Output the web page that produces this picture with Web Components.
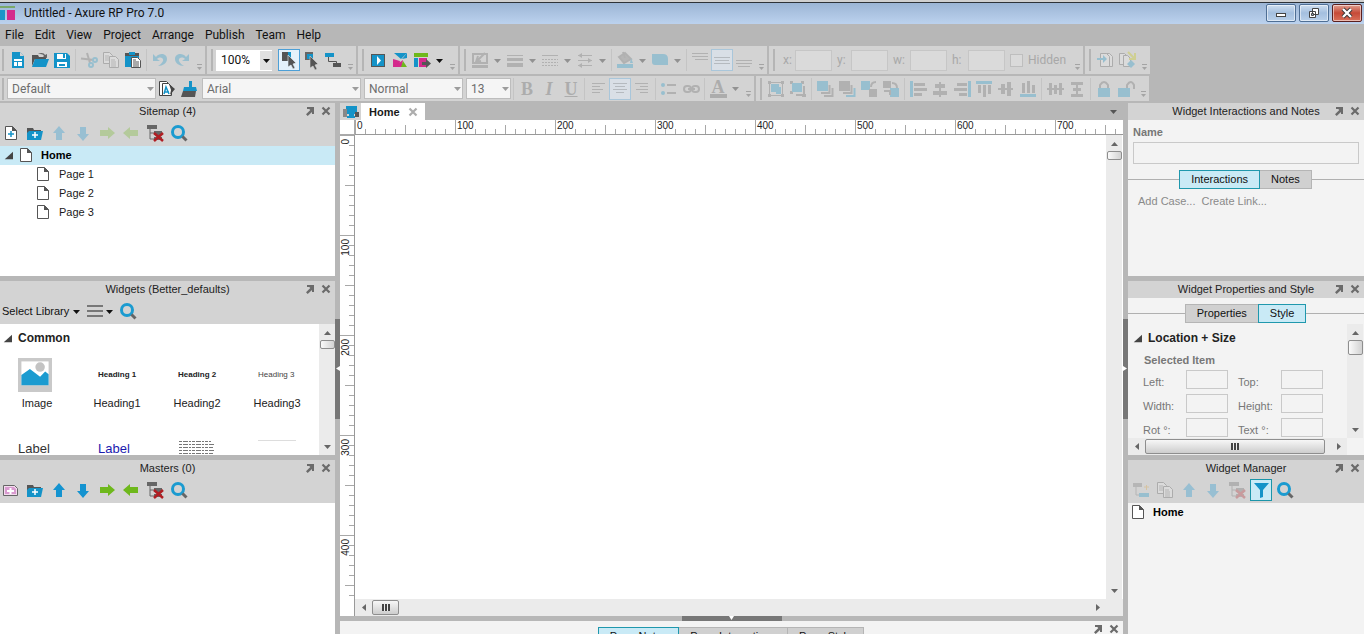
<!DOCTYPE html>
<html lang="en">
<head>
<meta charset="utf-8">
<title>Untitled - Axure RP Pro 7.0</title>
<style>
html,body{margin:0;height:100%;overflow:hidden;font:11px/14px "Liberation Sans",Arial,sans-serif;color:#1a1a1a;
--face:#d3d3d3;--frame:#b7b7b7;--pane:#f3f3f3;--blue:#1b95c9;--lit:#c9eaf6;--ui:Roboto,"Open Sans",sans-serif}
</style>
</head>
<body>
<app-window></app-window>
<script>
const B='#1493c8',G='#666',GR='#6eb81c',P='#d42a8c',R='#b01e23';
const page='<path d="M4.500 3.500h7l4 4v9h-11z" fill="#fff" stroke="#555"/><path d="M11 3v5h5z" fill="#555"/>';
const search='<circle cx="9" cy="9" r="5.500" fill="none" stroke="#1b9bd0" stroke-width="3"/><path d="M13.500 13.500l4 4" stroke="#666" stroke-width="3"/>';
const folder='<path d="M2 5h6l1 2h7v2H5l-3 7z" fill="#555"/><path d="M4 8h14l-2 9H2V10z" fill="#1493c8"/>';
const tree='<path d="M2 2h10v4H2zM9 8h8v4H9zM9 14h8v3H9z" fill="#666"/><path d="M5 5v11h4M5 10h4" stroke="#666" fill="none"/>';
const lines=(a,c=G)=>a.map(([x,y,w])=>`<path d="M${x} ${y}h${w}" stroke="${c}" stroke-width="1"/>`).join('');
const box=(x,y,w,h,c)=>`<rect x="${x}" y="${y}" width="${w}" height="${h}" fill="${c}"/>`;
const cursor='<path d="M9 6l8 8-3 1 2 4-2 1-2-4-3 2z" fill="#555" stroke="#d3d3d3" stroke-width=".6"/>';
const ICONS={
 newfile:'<path d="M4 2h8l4 4v12H4z" fill="#1493c8"/><path d="M6 9h8v7H6z" fill="#fff"/><path d="M6 11.500h8M9.500 11v5" stroke="#1493c8"/><path d="M12 2v4h4z" fill="#d3d3d3"/>',
 open:'<path d="M2 5h6l1 2h7v2H5l-3 7z" fill="#555"/><path d="M5 9h14l-3 8H2z" fill="#1493c8"/><path d="M8 4c4-2 6-1 7 1l2-1v4l-4-1 1-1c-1-2-3-2-6-2z" fill="#666"/>',
 save:'<path d="M2 3h13l3 3v12H2z" fill="#1493c8"/><path d="M5 4h9v5H5zM5 12h10v5H5z" fill="#fff"/><path d="M11 4h2v4h-2zM7 14h6v2H7z" fill="#1493c8"/>',
 cut:'<path d="M2 8.500l13 1.500M8 3l3 10" stroke="#666" stroke-width="2"/><circle cx="12" cy="15" r="2" fill="none" stroke="#1493c8" stroke-width="2"/><circle cx="16" cy="10" r="2" fill="none" stroke="#1493c8" stroke-width="2"/>',
 copy:'<path d="M2.500 2.500h6l3 3v8h-9z" fill="#eee" stroke="#555"/><path d="M8.500 6.500h6l3 3v8h-9z" fill="#eee" stroke="#555"/><path d="M4 6h4M4 8h4M4 10h4M10 10h4M10 12h5M10 14h5M10 16h5" stroke="#777"/>',
 paste:'<path d="M2 3h14v14H2z" fill="#1493c8"/><path d="M2 3h14v3H2z" fill="#555"/><path d="M6 2h6v3H6z" fill="#1493c8"/><path d="M8.500 7.500h6l3 3v7h-9z" fill="#fff" stroke="#555"/><path d="M10 10h3M10 12h6M10 14h6M10 16h6" stroke="#555"/>',
 undo:'<path d="M3 4v7h7l-3-2c3-3 7-1 6 2-1 2-3 4-5 5 5 0 9-3 9-7 0-5-7-7-11-2z" fill="#1493c8"/>',
 redo:'<path d="M17 4v7h-7l3-2c-3-3-7-1-6 2 1 2 3 4 5 5-5 0-9-3-9-7 0-5 7-7 11-2z" fill="#1493c8"/>',
 sel1:box(3,2,9,9,'#555')+'<path d="M9 2h3v9H9z" fill="#1493c8"/><path d="M9 5l8 8-3 1 2 4-2 1-2-4-3 2z" fill="#555" stroke="#e6f3fb" stroke-width=".6"/>',
 sel2:box(4,2,8,8,'#666')+box(6,4,6,5,B)+cursor,
 connect:box(2,3,9,4,B)+box(10,13,8,4,'#555')+'<path d="M5.500 7v4.500h8v2" stroke="#555" fill="none"/>',
 preview:box(3,4,14,13,'#555')+box(4,5,12,11,B)+'<path d="M9 6l4 4.500-4 4.500z" fill="#fff"/>',
 share:'<path d="M4 3h13l-6 6z" fill="#1493c8"/><path d="M3 9l7 2-1 6H3z" fill="#d42a8c"/><path d="M3 17l10-7-1 7z" fill="#d42a8c"/><path d="M12 9l5-6v5z" fill="#1493c8"/><path d="M13 11l4 6h-6z" fill="#6eb81c"/>',
 publish:box(2,3,14,4,GR)+box(2,8,4,9,B)+box(7,8,8,9,P)+'<path d="M10 12h4v-3l5 4.500-5 4.500v-3h-4z" fill="#555"/>',
 linecolor:'<path d="M3 4h14v9H3zM6 12l9-9M8 6l-2 6 5-1" stroke="#666" stroke-width="2" fill="none"/>'+box(2,15,16,3,G),
 linewidth:lines([[2,5.5,16]])+box(2,8,16,3,G)+box(2,13,16,4,G),
 linestyle:'<path d="M2 5.500h16" stroke="#666"/><path d="M2 9.500h16M2 12.500h16M2 15.500h16" stroke="#666" stroke-dasharray="2 1"/>',
 arrows:'<path d="M3 5.500h14M3 10.500h14M3 15.500h14" stroke="#666"/><path d="M7 3v5L3 5.500zM13 8v5l4-2.500zM7 13v5l-4-2.500z" fill="#666"/>',
 fill:'<path d="M4 7l6-4 6 6-7 4zM8 2l2 6" stroke="#666" stroke-width="2" fill="#777"/><path d="M16 8l2 5h-3z" fill="#1493c8"/>'+box(2,14,16,4,B),
 shape:'<path d="M2 4h11q5 0 5 5v6H5q-3 0-3-3z" fill="#1493c8"/>',
 vtop:lines([[2,3.5,16],[2,6.5,16],[5,9.5,13]]),vmid:lines([[2,7.5,16],[3,10.5,14],[2,13.5,16]]),vbot:lines([[2,10.5,16],[2,13.5,16],[4,16.5,12]]),
 editstyle:'<path d="M2.500 2.500h7l2 2v12h-9z" fill="#fff" stroke="#444"/><path d="M5.500 4.500h6l3 3v9h-9z" fill="#fff" stroke="#444"/><path d="M7 15l2-7 3 7M8 13h4" stroke="#1493c8" stroke-width="1.500" fill="none"/><path d="M12 5l6 5-5 6 1-5z" fill="#444"/>',
 brush:'<path d="M10 2h3v7h-3z" fill="#1493c8"/><path d="M5 8h12l1 4H4z" fill="#1493c8"/><path d="M4 12h13l-1 6H2z" fill="#555"/>',
 left:lines([[4,4.5,13],[4,7.5,8],[4,10.5,11],[4,13.5,8]]),center:lines([[3,4.5,14],[5,7.5,10],[3,10.5,14],[6,13.5,8]]),right:lines([[3,4.5,13],[8,7.5,8],[4,10.5,12],[8,13.5,8]]),
 bullets:'<circle cx="4" cy="6" r="2" fill="#1493c8"/><circle cx="4" cy="14" r="2" fill="#1493c8"/><path d="M8 6h9M8 14h9" stroke="#666" stroke-width="2"/>',
 link:'<rect x="3" y="7" width="7" height="6" rx="3" fill="none" stroke="#666" stroke-width="2"/><rect x="11" y="7" width="7" height="6" rx="3" fill="none" stroke="#666" stroke-width="2"/><path d="M7 10h7" stroke="#666" stroke-width="2"/>',
 master1:'<path d="M8.500 3.500h6l3 3v10h-9z" fill="#eee" stroke="#555"/><path d="M5.500 3.500h6l3 3v10h-9z" fill="#eee" stroke="#555"/><path d="M2 8h6V5l4 4-4 4v-3H2z" fill="#1493c8"/>',
 master2:'<path d="M2.500 3.500h5l3 3v8h-8z" fill="#eee" stroke="#555"/><path d="M6.500 5.500h4l3 3v8h-7z" fill="#eee" stroke="#555"/><path d="M11 2l6 6M12 9h6V3" stroke="#c6c800" stroke-width="2" fill="none"/><path d="M14 10l4 4-4 4-4-4z" fill="#1493c8"/>',
 group:'<path d="M3.500 3.500h13v13h-13z" fill="none" stroke="#666"/>'+box(2,2,3,3,G)+box(15,2,3,3,G)+box(2,15,3,3,G)+box(15,15,3,3,G)+box(5,5,8,8,B)+box(10,8,5,7,B),
 ungroup:box(2,2,3,3,G)+box(13,2,3,3,G)+box(2,12,3,3,G)+box(4,4,10,9,B)+'<path d="M16 7v9H8" stroke="#666" stroke-width="2" fill="none"/>'+box(14,15,4,3,G),
 front:box(2,2,11,10,B)+'<path d="M14.500 6v8H6M17.500 9v8H9" stroke="#666" stroke-width="2" fill="none"/>',
 back:box(2,2,11,10,G)+'<path d="M14.500 6v8H6" stroke="#666" stroke-width="2" fill="none"/><path d="M17.500 9v8H9" stroke="#1493c8" stroke-width="2" fill="none"/>',
 forward:box(2,2,9,9,B)+box(10,10,8,8,G)+'<path d="M17 3c-4 0-5 2-5 5" stroke="#666" stroke-width="2" fill="none"/>',
 backward:box(2,2,8,7,G)+box(9,9,9,9,B)+'<path d="M11 4c4 0 5 2 5 5M3 12h6v4" stroke="#666" stroke-width="2" fill="none"/>',
 al:box(2,2,3,16,B)+box(6,4,11,3,G)+box(6,9,13,3,G)+box(6,14,8,3,G),
 ac:box(9,3,2,15,G)+box(5,5,10,4,G)+box(3,12,14,4,G),
 ar:box(16,2,3,16,B)+box(5,4,10,3,G)+box(2,9,13,3,G)+box(7,14,8,3,G),
 at:box(2,2,16,3,B)+box(4,6,3,8,G)+box(9,6,3,12,G)+box(14,6,3,9,G),
 am:box(2,9,15,2,G)+box(5,5,4,10,G)+box(11,3,4,14,G),
 ab:box(2,15,16,3,B)+box(4,4,3,10,G)+box(9,2,3,12,G)+box(14,6,3,8,G),
 dh:box(4,4,3,12,G)+box(9,6,3,9,G)+box(14,4,3,12,G)+box(2,9,17,2,G),
 dv:box(4,3,12,3,G)+box(6,9,8,3,G)+box(4,15,12,3,G)+box(9,3,2,14,G),
 lock:'<path d="M6 10V6q4-6 8 0v4" stroke="#666" stroke-width="2" fill="none"/>'+box(4,9,12,9,B),
 unlock:'<path d="M11 10V6q4-6 7 0v4" stroke="#666" stroke-width="2" fill="none"/>'+box(2,9,12,9,B),
 addpage:page+'<path d="M7 11h6M10 8v6" stroke="#1493c8" stroke-width="1.500"/>',
 addfolder:folder+'<path d="M7 12h6M10 9v6" stroke="#fff" stroke-width="1.500"/>',
 addmaster:'<path d="M2.500 5.500h11l3 3v7h-14z" fill="#f3dcee" stroke="#666"/><path d="M4 7h9l2 2v5H4z" fill="#d99bd0"/><path d="M6 11h7M9.500 8v6" stroke="#fff" stroke-width="2"/>',
 up:'<path d="M10 3l6 7h-3v7H7v-7H4z" fill="#1493d0"/>',down:'<path d="M10 18l6-7h-3V4H7v7H4z" fill="#1493d0"/>',
 indent:'<path d="M18 10l-7 6v-3H3V7h8V4z" fill="#6eb81c"/>',outdent:'<path d="M2 10l7 6v-3h8V7H9V4z" fill="#6eb81c"/>',
 remove:tree+'<path d="M9 10l9 8M18 10l-9 8" stroke="#b01e23" stroke-width="2.500"/>',
 search,page,
 menu:'<path d="M2 5h16M2 10h16M2 15h16" stroke="#777" stroke-width="2"/>',
 addtree:'<path d="M2 3h9v4H2zM10 13h8v4h-8z" fill="#777"/><path d="M5 6v9h5" stroke="#777" fill="none"/>'+box(8,13,10,4,B)+'<path d="M13 7h5M15.500 5v5" stroke="#e0a030"/>',
 filter:'<path d="M3 3h15l-6 7v7l-3 1v-8z" fill="#1493c8"/>',
 devices:'<path d="M5 4h11v8H5z" fill="#1493c8"/><path d="M8 12h5v3H8z" fill="#1493c8"/><path d="M2 7h4v8H2z" fill="#888"/><path d="M14 10h4v5h-4z" fill="#555"/><path d="M6 14h8v2H6z" fill="#1493c8"/>',
 pop:'<path d="M7 6h7v7l-2-2-4.300 4-1.700-1.700L10.300 9z" fill="#6b6b6b"/><path d="M7 6h7v7h-2V8H7z" fill="#6b6b6b"/>',
 close:'<path d="M6.500 6.500l7 7M13.500 6.500l-7 7" stroke="#6b6b6b" stroke-width="2.200"/>',
 twist:'<path d="M16 5v10H5z" fill="#444"/>',
 picture:'<path d="M0 0h20v20H0z" fill="#c9c9c9"/><path d="M2 2h16v14H2z" fill="#fff"/><circle cx="13" cy="5.300" r="2.800" fill="#c3c3c3"/><path d="M2 10l5-3.500 6 4.500 3-3 2 1.500V16H2z" fill="#1b9bd0"/>',
};
const svg=(n,s=20)=>`<svg width="${s}" height="${s}" viewBox="0 0 20 20" aria-hidden="true">${ICONS[n]}</svg>`;
const tri=(d='d',c='#666')=>`<svg width="7" height="7" viewBox="0 0 7 7" aria-hidden="true"><path d="${{d:'M0 2h7L3.500 6z',u:'M0 6h7L3.500 2z',l:'M6 0v7L2 3.500z',r:'M2 0v7l4-3.500z'}[d]}" fill="${c}"/></svg>`;
const BASE='*{box-sizing:border-box}button,input,select{font:inherit;color:inherit;margin:0;padding:0;border:0;border-radius:0;background:none;min-width:0}svg{display:block;flex:none}';
function define(name,css,html){
 customElements.define(name,class extends HTMLElement{
  connectedCallback(){
   if(this.shadowRoot)return;
   this.attachShadow({mode:'open'}).innerHTML=`<style>${BASE}${css}</style>`+(typeof html==='function'?html(this):html);
  }
 });
}
const at=(e,n,d='')=>e.getAttribute(n)??d;

define('tool-button',`:host{display:flex;flex:none;width:22px;height:22px}button{display:grid;place-items:center;place-content:center;width:100%;height:100%}
button:disabled>*{opacity:.3}:host([on]) button{background:#e4f1fa;border:1px solid #4d9fd6}:host([on]) button:disabled{background:#d9dfe6;border-color:#a9c6da}
:host([wide]){width:24px}:host([key]){margin:0 1px}:host([key]) button{background:var(--lit);border-color:#1b95a9}
b{font:bold 18px/20px "Liberation Serif",serif;color:#555}.i{font-style:italic}.u{text-decoration:underline}.a{border-bottom:4px solid #555;line-height:14px;padding:0 2px}`,
 e=>`<button type="button" aria-label="${at(e,'icon')||at(e,'glyph')}" ${e.hasAttribute('off')?'disabled':''}>${e.hasAttribute('glyph')?`<b class="${at(e,'glyph').toLowerCase()}">${at(e,'glyph')}</b>`:svg(at(e,'icon'))}</button>`);
define('tool-arrow',':host{display:grid;place-items:center;flex:none;width:13px;height:22px}:host([off]){opacity:.7}',e=>tri('d',e.hasAttribute('off')?'#777':'#111'));
define('tool-sep',':host{display:grid;place-items:center;flex:none;width:5px;height:24px}i{width:1px;height:22px;background:#c4c4c4}','<i></i>');
define('tool-group',`:host{display:flex;align-items:center;background:var(--face);border-right:2px solid var(--frame);padding-left:4px}:host([first]){padding-left:2px}
.grip{flex:none;width:2px;height:22px;background:#b5b5b5;margin-right:3px}.more{flex:none;width:12px;align-self:flex-end;padding:0 3px 3px;opacity:.5}`,
 '<span class="grip"></span><slot></slot><span class="more"><svg width="7" height="7" viewBox="0 0 7 7"><path d="M1 .500h5" stroke="#777"/><path d="M1 3h5L3.500 6z" fill="#777"/></svg></span>');
define('tool-select',`:host{display:grid;flex:none;height:21px;font:12px/18px var(--ui);width:var(--w)}
select,.arrow{grid-area:1/1}select{appearance:none;width:100%;background:#f5f5f5;border:1px solid #bdbdbd;padding:0 14px 0 4px;color:#6d6d6d;opacity:1}
.arrow{justify-self:end;display:grid;place-items:center;width:12px;pointer-events:none;opacity:.7}
:host([live]) select{background:#fff;color:#111;border-color:#fff}:host([live]) .arrow{background:#e0e0e0;opacity:1;margin:1px 0}`,
 e=>`<select aria-label="${at(e,'label')}"><option>${at(e,'value')}</option></select><span class="arrow">${tri('d',e.hasAttribute('live')?'#111':'#777')}</span>`);
define('coord-field',`:host{display:flex;flex:none;align-items:center;font:12px/18px var(--ui);color:#a8a8a8;width:var(--w);padding-left:5px}
label{display:flex;flex:1;justify-content:space-between;align-items:center}input{width:37px;height:21px;border:1px solid #c6c6c6;background:#dadada}`,
 e=>`<label>${at(e,'label')}<input type="text" disabled></label>`);
define('hidden-check',`:host{display:block;flex:none;font:12px/18px var(--ui);color:#a8a8a8;width:66px;padding-left:5px}
label{display:flex;align-items:center;gap:5px}input{appearance:none;width:13px;height:13px;border:1px solid #bebebe;background:#dadada}`,
 '<label><input type="checkbox" disabled>Hidden</label>');

define('title-bar',`:host{display:flex;height:24px;border-top:2px solid #d0d0d0;box-shadow:inset 0 1px #2e3338;background:linear-gradient(#9ab4d4,#bcd2ee);align-items:center;
 padding:0 2px 0 0;font:12px/20px var(--ui);color:#111}
.logo{margin-right:9px}.t{flex:1;white-space:nowrap}.w{display:flex;gap:3px}
button{width:30px;height:18px;border:1px solid #4f6f95;border-radius:2px;background:linear-gradient(#cfdff0,#a4bfdf 50%,#b9d0ea);display:grid;place-items:center;box-shadow:inset 0 0 0 1px #ffffff88}
.x{background:linear-gradient(#e0a090,#c64a38 50%,#d9705a);border-color:#5a2020}`,
 `<svg class="logo" width="15" height="16" viewBox="0 0 15 16"><path d="M0 1h15v2H0z" fill="#7aa86a"/><path d="M0 5h5v10H0z" fill="#1b95c9"/><path d="M7 5h8v10H7z" fill="#d42a8c"/></svg><span class="t">Untitled - Axure RP Pro 7.0</span>
<div class="w"><button aria-label="Minimize"><svg width="12" height="12"><rect x="1.500" y="6.500" width="9" height="3" fill="#fff" stroke="#444"/></svg></button>
<button aria-label="Restore"><svg width="12" height="12"><path d="M4.500 1.500h6v6h-6zM1.500 4.500h6v6h-6z" fill="#fff" stroke="#444"/><path d="M3.500 6.500h2v2h-2z" fill="#9ab" stroke="#444"/></svg></button>
<button class="x" aria-label="Close"><svg width="12" height="12"><path d="M2 2l8 8M10 2l-8 8" stroke="#333" stroke-width="4"/><path d="M2 2l8 8M10 2l-8 8" stroke="#fff" stroke-width="2.400"/></svg></button></div>`);
define('menu-bar',`:host{display:flex;gap:11px;height:22px;padding-left:5px;align-items:center;font:12px/20px var(--ui);color:#111}`,
 ['File','Edit','View','Project','Arrange','Publish','Team','Help'].map(t=>`<button type="button">${t}</button>`).join(''));
const b=(n,x='off')=>`<tool-button icon="${n}" ${x}></tool-button>`, s='<tool-sep></tool-sep>', ad='<tool-arrow off></tool-arrow>';
define('tool-bars',`:host{display:block}.r{display:flex;height:28px;margin-bottom:2px;overflow:hidden}.q{height:25px}
tool-group{flex:none}.z{--w:56px;margin-right:6px}.z1{--w:149px}.z2{--w:159px;margin:0 3px 0 2px}.z3{--w:99px;margin-right:3px}.z4{--w:45px}`,
 `<div class="r"><tool-group first>${b('newfile','')+b('open','')+b('save','')+s+b('cut')+b('copy')+b('paste','')+s+b('undo')+b('redo')}</tool-group>
<tool-group><tool-select class="z" live label="Zoom" value="100%"></tool-select>${b('sel1','on')+b('sel2','')+b('connect','')}</tool-group>
<tool-group>${b('preview','')+b('share','')+b('publish','')}<tool-arrow></tool-arrow></tool-group>
<tool-group>${['linecolor','linewidth','linestyle','arrows'].map(n=>b(n)+ad).join('')+s+b('fill')+ad+b('shape')+ad+s+b('vtop')+b('vmid','off on')+b('vbot')}</tool-group>
<tool-group><coord-field style="--w:54px" label="x:"></coord-field><coord-field style="--w:56px" label="y:"></coord-field><coord-field style="--w:59px" label="w:"></coord-field><coord-field style="--w:58px" label="h:"></coord-field><hidden-check></hidden-check></tool-group>
<tool-group>${b('master1')+b('master2')}</tool-group></div>
<div class="r q"><tool-group first><tool-select class="z1" label="Style" value="Default"></tool-select>${b('editstyle','')+b('brush','')}
<tool-select class="z2" label="Font" value="Arial"></tool-select><tool-select class="z3" label="Typeface" value="Normal"></tool-select><tool-select class="z4" label="Size" value="13"></tool-select>${s}
<tool-button glyph="B" off></tool-button><tool-button glyph="I" off></tool-button><tool-button glyph="U" off></tool-button>${s+b('left')+b('center','off on')+b('right')+s+b('bullets')+b('link')+s}<tool-button glyph="A" off></tool-button>${ad}</tool-group>
<tool-group>${b('group')+b('ungroup')+s+['front','back','forward','backward'].map(n=>b(n)).join('')+s+['al','ac','ar','at','am','ab'].map(n=>b(n)).join('')+s+b('dh')+b('dv')+s+b('lock')+b('unlock')}</tool-group></div>`);

define('dock-title',`:host{display:grid;grid-template-columns:36px 1fr 36px;height:17px;align-items:center;text-align:center;background:var(--face);color:#222}
.c{display:flex;justify-content:flex-end;gap:1px;padding-right:2px}button{width:15px;height:15px;display:grid;place-content:center;margin-bottom:1px}.t{grid-column:2;white-space:nowrap;padding-bottom:2px}:host([bare]){background:none}`,
 e=>`<span class="t"><slot></slot></span><span class="c"><button aria-label="Float">${svg('pop')}</button><button aria-label="Close">${svg('close')}</button></span>`);
define('dock-tools',':host{display:flex;height:26px;align-items:center;background:var(--face);padding-left:1px}','<slot></slot>');
define('tree-row',`:host{display:flex;align-items:center;height:19px;padding-left:1px}:host([sel]){background:var(--lit)}:host([child]){padding-left:33px}
:host([plain]){padding-left:0}svg{margin-bottom:1px}.n{margin-left:5px;padding-bottom:2px}:host([bold]) .n{font-weight:bold;color:#000}.tw{width:15px}:host([child]) .n{margin-left:6px}`,
 e=>(e.hasAttribute('child')||e.hasAttribute('plain')?'':`<span class="tw">${svg('twist',15)}</span>`)+svg('page')+'<span class="n"><slot></slot></span>');
define('tab-pair',`:host{display:flex;align-items:center;height:19px}:host::before,:host::after{content:"";flex:1;height:1px;background:#b0b0b0}
button{height:19px;padding:0 11px 2px;background:#d0d0d0;border:1px solid #b5b5b5;margin-left:-1px;white-space:nowrap;color:#111}button.on{background:var(--lit);border-color:#1f98ad;position:relative}`,
 e=>at(e,'tabs').split('|').map((t,i)=>`<button type="button" class="${i==at(e,'on')?'on':''}">${t}</button>`).join(''));
define('scroll-rail',`:host{display:flex;flex-direction:column;align-items:center;width:16px;background:#ebebeb;padding:5px 0}
:host([h]){flex-direction:row;width:auto;height:17px;padding:0 5px}.th{flex:none;display:grid;place-items:center;width:15px;height:var(--t,9px);margin-top:4px;border:1px solid #8e8e8e;border-radius:2px;background:linear-gradient(90deg,#fafafa,#d2d2d2)}
:host([h]) .th{width:var(--t);height:15px;margin:0 0 0 5px;background:linear-gradient(#f7f7f7,#cdcdcd)}.sp{flex:1}.g{width:8px;height:7px;background:repeating-linear-gradient(90deg,#444 0 2px,#eee 2px 3px)}`,
 e=>{const h=e.hasAttribute('h');return tri(h?'l':'u')+`<span class="th">${h?'<i class="g"></i>':''}</span><span class="sp"></span>`+tri(h?'r':'d');});
define('widget-tile',`:host{display:grid;grid-template-rows:34px 14px;padding-top:6px;justify-items:center;text-align:center;row-gap:4px;color:#222}
.p{display:grid;align-items:center;justify-self:start;padding-left:21px;font:bold 8px/10px "Liberation Sans",sans-serif}:host([thin]) .p{font-weight:normal;color:#444}:host([big]) .p{font:13px/16px "Liberation Sans",sans-serif;color:#333}:host([blue]) .p{color:#1a1aae}`,
 '<span class="p"><slot name="art"></slot></span><slot></slot>');
define('site-map',':host{display:flex;flex-direction:column;background:#fff}dock-tools{padding:0;margin-left:-1px;overflow:hidden}',
 `<dock-title>Sitemap (4)</dock-title><dock-tools>${b('addpage','wide')+b('addfolder','wide')+['up','down','indent','outdent'].map(n=>b(n,'wide off')).join('')+b('remove','wide')+b('search','wide')}</dock-tools>
<tree-row sel bold>Home</tree-row><tree-row child>Page 1</tree-row><tree-row child>Page 2</tree-row><tree-row child>Page 3</tree-row>`);
define('widget-library',`:host{display:flex;flex-direction:column;background:#fff;overflow:hidden}.b{display:grid;grid-template-columns:1fr 16px;flex:1;min-height:0}
.l{overflow:hidden;min-height:0;padding-top:4px}h2{display:flex;align-items:center;gap:3px;margin:0;font:bold 12px/20px "Liberation Sans",sans-serif;height:20px;color:#222}
.g{display:grid;grid-template-columns:repeat(4,80px);margin-left:-3px;padding-top:4px;row-gap:16px}dock-tools tool-button{margin-left:3px}tool-arrow{margin:0 -2px 0 0}.k{color:#111;padding:0 1px}tool-button+tool-arrow{margin-left:-3px}`,
 `<dock-title>Widgets (Better_defaults)</dock-title><dock-tools><button class="k">Select Library</button><tool-arrow></tool-arrow>${b('menu','')}<tool-arrow></tool-arrow>${b('search','')}</dock-tools>
<div class="b"><div class="l"><h2>${svg('twist',15)}Common</h2><div class="g">
<widget-tile><span slot="art">${svg('picture',34)}</span>Image</widget-tile><widget-tile><span slot="art">Heading 1</span>Heading1</widget-tile><widget-tile><span slot="art">Heading 2</span>Heading2</widget-tile><widget-tile thin><span slot="art">Heading 3</span>Heading3</widget-tile>
<widget-tile big><span slot="art">Label</span></widget-tile><widget-tile big blue><span slot="art">Label</span></widget-tile>
<widget-tile><svg slot="art" width="38" height="18"><path d="M1 1.500h32M1 4.500h36M1 7.500h34M1 10.500h36M1 13.500h34M1 16.500h35" stroke="#777" stroke-width="1" stroke-dasharray="3 1 5 1 2 1"/></svg></widget-tile>
<widget-tile><svg slot="art" width="38" height="20"><path d="M0 1.500h38" stroke="#ddd"/></svg></widget-tile></div></div><scroll-rail></scroll-rail></div>`);
define('master-list',':host{display:flex;flex-direction:column;background:#fff}dock-tools{padding:0;margin-left:-1px;overflow:hidden}',
 `<dock-title>Masters (0)</dock-title><dock-tools>${['addmaster','addfolder','up','down','indent','outdent','remove','search'].map(n=>b(n,'wide')).join('')}</dock-tools>`);
define('interaction-pane',`:host{display:flex;flex-direction:column;background:var(--pane)}label{display:grid;gap:3px;padding:5px 5px 0;font-weight:bold;color:#777}input{height:22px;width:100%;border:1px solid #c9c9c9}
tab-pair{margin-top:6px}p{display:flex;gap:6px;margin:5px 0 0 10px}a{color:#8a8a8a;text-decoration:none}`,
 `<dock-title>Widget Interactions and Notes</dock-title><label>Name<input type="text"></label><tab-pair tabs="Interactions|Notes" on="0"></tab-pair><p><a href="#case">Add Case...</a><a href="#link">Create Link...</a></p>`);
define('style-pane',`:host{display:flex;flex-direction:column;background:var(--pane);overflow:hidden}tab-pair{margin-top:6px}.b{display:grid;grid-template-columns:1fr 17px;grid-template-rows:1fr 17px;flex:1;min-height:0;margin-top:1px}
.l{overflow:hidden;min-height:0;padding-top:4px}h2{display:flex;align-items:center;gap:3px;margin:0 0 0 2px;font:bold 12px/20px "Liberation Sans",sans-serif;color:#222}h3{margin:5px 0 3px 16px;font:bold 11px/14px "Liberation Sans",sans-serif;color:#777}
.f{display:grid;grid-template-columns:43px 42px 53px 42px;gap:5px 0;margin-left:15px;color:#777}.f label{align-self:end}.f input{height:19px;border:1px solid #c9c9c9}.f label:nth-of-type(even){padding-left:10px}.v{--t:15px}.h{--t:180px}`,
 `<dock-title>Widget Properties and Style</dock-title><tab-pair tabs="Properties|Style" on="1"></tab-pair><div class="b"><div class="l"><h2>${svg('twist',15)}Location + Size</h2><h3>Selected Item</h3><div class="f">
${['Left:','Top:','Width:','Height:','Rot °:','Text °:'].map((t,i)=>`<label for="f${i}">${t}</label><input id="f${i}" type="text">`).join('')}</div></div><scroll-rail class="v"></scroll-rail><scroll-rail class="h" h></scroll-rail></div>`);
define('manager-pane',':host{display:flex;flex-direction:column;background:var(--pane)}',
 `<dock-title>Widget Manager</dock-title><dock-tools>${['addtree','copy','up','down','remove'].map(n=>b(n,'wide off')).join('')+b('filter','on key')+b('search','wide')}</dock-tools><tree-row plain bold>Home</tree-row>`);

const T='#a8a8a8';
define('ruler-strip',`:host{display:flex;overflow:hidden;background:#fff;font:10px/12px "Liberation Sans",sans-serif;color:#222}
span{flex:none;width:100px;padding-left:2px;
background:linear-gradient(${T},${T}) 0 0/1px 100% no-repeat,linear-gradient(${T},${T}) 50px 100%/1px 9px no-repeat,repeating-linear-gradient(90deg,${T} 0 1px,transparent 1px 10px) 0 100%/100% 5px no-repeat}
:host{border-bottom:1px solid #999}:host([v]){flex-direction:column;border:0;border-right:1px solid #999}
:host([v]) span{width:auto;height:100px;padding:4px 0 0;background:linear-gradient(${T},${T}) 0 0/100% 1px no-repeat,linear-gradient(${T},${T}) 100% 50px/9px 1px no-repeat,repeating-linear-gradient(${T} 0 1px,transparent 1px 10px) 100% 0/5px 100% no-repeat}
:host([v]) b{display:block;writing-mode:vertical-rl;transform:rotate(180deg);width:12px}b{font-weight:normal}`,
 e=>Array.from({length:+at(e,'count')},(_,i)=>`<span><b>${i*100}</b></span>`).join(''));
define('split-bar',`:host{display:grid;place-items:center;background:var(--frame)}i{display:grid;place-items:center;width:5px;height:100px;background:#777}:host([h]) i{width:100px;height:5px}`,
 e=>`<i><svg width="5" height="5" viewBox="0 0 5 5"><path d="${{l:'M5 0v5L1 2.500z',r:'M0 0v5l4-2.500z',d:'M0 0h5L2.500 4z'}[at(e,'dir')]}" fill="#fff"/></svg></i>`);
define('design-area',`:host{display:grid;grid-template-rows:17px 15px minmax(0,1fr) 17px 5px 13px;min-width:0;min-height:0}
.tabs{display:flex;align-items:stretch}.dev{width:21px;background:var(--face);display:grid;place-content:center;overflow:hidden}.tab{display:flex;align-items:center;background:#fff;padding:0 4px 0 8px;font-weight:bold;gap:6px}
.tab button{opacity:.55;width:15px;height:15px;display:grid;place-content:center}.more{margin-left:auto;width:20px;display:grid;place-items:center}
.top,.mid,.bot{display:grid;grid-template-columns:15px minmax(0,1fr);background:#fff}.top i{border-right:1px solid #aaa;border-bottom:1px solid #aaa}.mid{grid-template-columns:15px minmax(0,1fr) 17px;min-height:0}.mid>*{min-height:0}.bot{grid-template-columns:15px minmax(0,1fr) 17px}.bot i{border-right:1px solid #999}.bot u{background:#ebebeb}
.bot scroll-rail{--t:27px}.page{background:#fff}.foot{display:grid;background:var(--pane);overflow:hidden;height:13px}.foot>*{grid-area:1/1}.foot tab-pair{margin-top:6px}`,
 `<div class="tabs"><button class="dev" aria-label="Adaptive views">${svg('devices')}</button><span class="tab">Home<button aria-label="Close tab">${svg('close')}</button></span><button class="more" aria-label="Open pages">${tri('d','#555')}</button></div>
<div class="top"><i></i><ruler-strip count="8"></ruler-strip></div><div class="mid"><ruler-strip v count="5"></ruler-strip><div class="page"></div><scroll-rail></scroll-rail></div>
<div class="bot"><i></i><scroll-rail h></scroll-rail><u></u></div><split-bar h dir="d"></split-bar>
<div class="foot"><tab-pair tabs="Page Notes|Page Interactions|Page Style" on="0"></tab-pair><dock-title bare></dock-title></div>`);
define('app-window',`:host{display:flex;flex-direction:column;height:100vh;background:var(--frame);overflow:hidden}
main{flex:1;min-height:0;display:grid;grid-template-columns:335px 5px minmax(0,1fr) 5px 236px;grid-template-rows:minmax(0,1fr)}.c{display:grid;grid-template-rows:173px 174px minmax(0,1fr);row-gap:5px;min-height:0}.c>*{min-height:0}`,
 `<title-bar></title-bar><menu-bar></menu-bar><tool-bars></tool-bars><main><div class="c"><site-map></site-map><widget-library></widget-library><master-list></master-list></div><split-bar dir="l"></split-bar><design-area></design-area><split-bar dir="r"></split-bar>
<div class="c"><interaction-pane></interaction-pane><style-pane></style-pane><manager-pane></manager-pane></div></main>`);
</script>
</body>
</html>
